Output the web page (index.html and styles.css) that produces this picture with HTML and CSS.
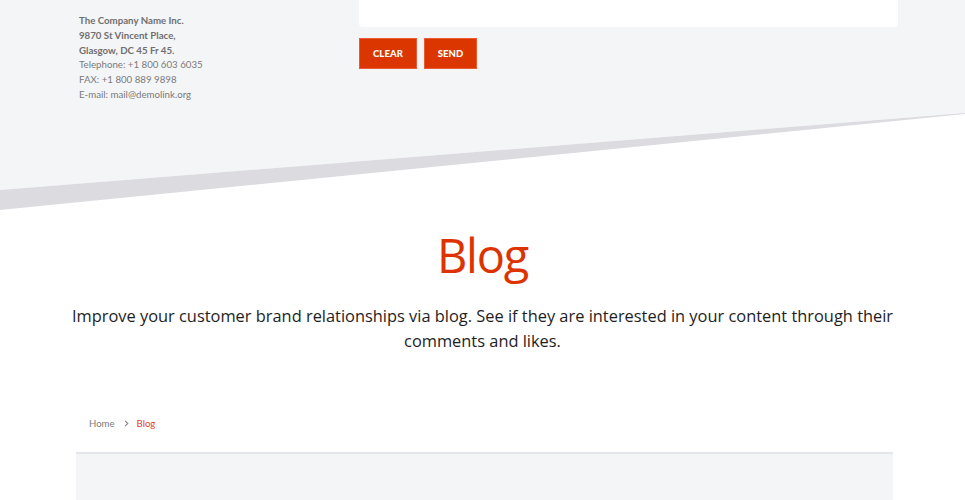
FILE: index.html
```html
<!DOCTYPE html>
<html>
<head>
<meta charset="utf-8">
<link rel="stylesheet" href="styles.css">
</head>
<body>
<section class="contact">
  <div class="contact-inner">
    <address class="address">
      <div class="b">The Company Name Inc.</div>
      <div class="b">9870 St Vincent Place,</div>
      <div class="b">Glasgow, DC 45 Fr 45.</div>
      <div>Telephone: +1 800 603 6035</div>
      <div>FAX: +1 800 889 9898</div>
      <div>E-mail: mail@demolink.org</div>
    </address>
    <div class="form">
      <div class="textarea"></div>
      <div class="buttons">
        <button class="btn btn-clear">CLEAR</button>
        <button class="btn btn-send">SEND</button>
      </div>
    </div>
  </div>
</section>
<div class="divider">
  <svg viewBox="0 0 965 100" preserveAspectRatio="none" width="965" height="100">
    <polygon points="0,0 965,0 965,3 0,80" fill="#f4f5f7"/>
    <polygon points="0,80 965,3 965,4 0,100" fill="#dcdce0"/>
  </svg>
</div>
<section class="blog">
  <h1 class="title">Blog</h1>
  <p class="lead">Improve your customer brand relationships via blog. See if they are interested in your content through their comments and likes.</p>
  <nav class="crumbs">
    <span class="crumb">Home</span>
    <svg class="chev" width="5" height="7" viewBox="0 0 5 7"><path d="M1 0.8 L3.8 3.5 L1 6.2" fill="none" stroke="#888" stroke-width="1.1"/></svg>
    <span class="crumb active">Blog</span>
  </nav>
  <div class="panel"></div>
</section>
</body>
</html>
```
FILE: styles.css
```css
* { box-sizing: border-box; }
html, body { margin: 0; padding: 0; background: #fff; }
body { width: 965px; height: 500px; overflow: hidden; font-family: Lato, "Liberation Sans", sans-serif; }

.contact { background: #f4f5f7; height: 110px; }
.contact-inner { display: flex; padding-left: 79px; }
.address {
  font-style: normal;
  font-size: 9.7px;
  line-height: 14.8px;
  color: #7a7a7a;
  padding-top: 13px;
  width: 280px;
}
.address .b { font-weight: 700; color: #6f6f6f; }
.form { width: 539px; }
.textarea {
  height: 27px;
  background: #fff;
  border-radius: 0 0 4px 4px;
}
.buttons { display: flex; gap: 7px; margin-top: 11px; }
.btn {
  height: 31px;
  background: #dc3600;
  border: 1px solid #ea5a33;
  color: #fff;
  font-family: Lato, "Liberation Sans", sans-serif;
  font-weight: 900;
  font-size: 9.5px;
  padding: 0;
  letter-spacing: 0.1px;
}
.btn-clear { width: 58px; }
.btn-send { width: 53px; }

.divider { height: 100px; line-height: 0; }
.divider svg { display: block; }

.blog { display: flex; flex-direction: column; align-items: center; }
.title {
  margin: 15px 0 0;
  font-family: "Open Sans", sans-serif;
  font-weight: 400;
  font-size: 47px;
  line-height: 60px;
  color: #dd3300;
  letter-spacing: -1.2px;
}
.lead {
  margin: 18px 0 0;
  width: 860px;
  text-align: center;
  font-family: "Open Sans", sans-serif;
  font-size: 16.4px;
  line-height: 25px;
  color: #1e1e1e;
}
.crumbs {
  align-self: stretch;
  display: flex;
  align-items: center;
  gap: 7px;
  margin: 62px 0 0 89px;
  font-size: 9.6px;
  height: 16px;
}
.crumb { color: #7d7d7d; }
.crumb.active { color: #e0421a; }
.chev { margin-left: 2px; margin-right: 1px; }
.panel {
  margin-top: 21px;
  width: 817px;
  height: 60px;
  align-self: flex-start;
  margin-left: 76px;
  background: #f4f5f7;
  border-top: 2px solid #e3e6ea;
}
```
